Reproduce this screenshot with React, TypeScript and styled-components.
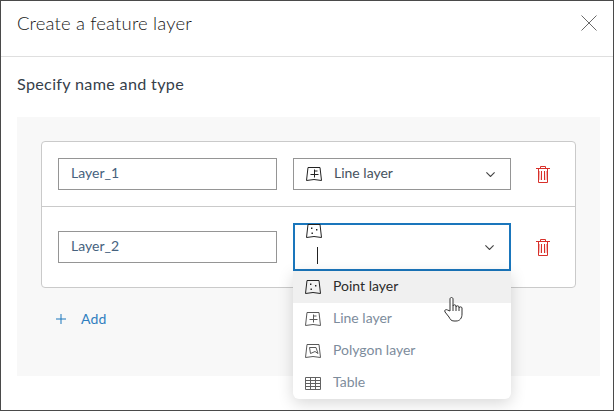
import React from 'react';
import styled, { createGlobalStyle } from 'styled-components';

const GlobalStyle = createGlobalStyle`
  html, body {
    margin: 0;
    padding: 0;
    background: #fff;
  }
  * {
    box-sizing: border-box;
  }
`;

const Dialog = styled.div`
  width: 614px;
  height: 411px;
  border: 1px solid #4a4a4a;
  background: #fff;
  font-family: Lato, "Open Sans", sans-serif;
  color: #4c4c4c;
  overflow: hidden;
  position: relative;
`;

const Header = styled.div`
  height: 56px;
  border-bottom: 1px solid #dfdfdf;
  padding: 10px 16px 0;
  display: flex;
  align-items: flex-start;
  justify-content: space-between;
`;

const Title = styled.div`
  font-size: 18.5px;
  line-height: 24px;
  font-weight: 300;
  color: #161616;
  letter-spacing: 0.15px;
`;

const CloseButton = styled.div`
  width: 16px;
  height: 16px;
  margin-top: 4px;
  display: flex;
`;

const Body = styled.div`
  padding: 17px 13px 0 16px;
`;

const SectionTitle = styled.div`
  font-size: 16.2px;
  line-height: 20px;
  color: #36404a;
  margin-bottom: 23px;
  letter-spacing: 0.3px;
`;

const Panel = styled.div`
  height: 259px;
  background: #f8f8f8;
  padding: 24px;
`;

const Card = styled.div`
  background: #fff;
  border: 1px solid #cacaca;
  border-radius: 4px;
`;

const Row = styled.div<{ $tall?: boolean }>`
  height: ${p => (p.$tall ? '80px' : '65px')};
  padding: 0 16px;
  display: flex;
  align-items: center;
  border-bottom: ${p => (p.$tall ? 'none' : '1px solid #cacaca')};
`;

const NameInput = styled.div`
  width: 219px;
  height: 32px;
  border: 1px solid #959595;
  padding: 0 12px;
  font-size: 14px;
  line-height: 28px;
  color: #46627e;
  flex: none;
`;

const SelectBox = styled.div<{ $open?: boolean }>`
  position: relative;
  width: 218px;
  height: ${p => (p.$open ? '48px' : '32px')};
  margin-left: 16px;
  flex: none;
  border: ${p => (p.$open ? '2px solid #1a76bc' : '1px solid #959595')};
  display: flex;
  align-items: ${p => (p.$open ? 'flex-start' : 'center')};
  padding-left: ${p => (p.$open ? '11px' : '12px')};
  font-size: 14px;
  color: #46525e;
`;

const SelectIcon = styled.span<{ $open?: boolean }>`
  display: flex;
  margin-top: ${p => (p.$open ? '-2px' : '0')};
`;

const SelectLabel = styled.span`
  margin-left: 12px;
  margin-bottom: 4px;
`;

const Chevron = styled.span`
  position: absolute;
  right: 15px;
  top: 50%;
  margin-top: -2px;
  display: flex;
`;

const Caret = styled.span`
  position: absolute;
  left: 22px;
  top: 22px;
  width: 1px;
  height: 17px;
  background: #222;
`;

const Trash = styled.div`
  margin-left: 25px;
  display: flex;
`;

const Menu = styled.div`
  position: absolute;
  top: 46px;
  left: -2px;
  width: 218px;
  background: #fff;
  border-radius: 0 0 6px 6px;
  box-shadow: 0 4px 16px rgba(0, 0, 0, 0.16);
  z-index: 5;
`;

const MenuItem = styled.div<{ $active?: boolean }>`
  height: 32px;
  display: flex;
  align-items: center;
  padding-left: 12px;
  font-size: 14px;
  background: ${p => (p.$active ? '#f0f0f0' : 'transparent')};
  color: ${p => (p.$active ? '#2b2b2b' : '#7d8c9c')};
`;

const MenuIcon = styled.span<{ $active?: boolean }>`
  display: flex;
  opacity: ${p => (p.$active ? 1 : 0.75)};
`;

const HandCursor = styled.div`
  position: absolute;
  left: 443px;
  top: 295px;
  z-index: 6;
  display: flex;
`;

const AddRow = styled.div`
  display: flex;
  align-items: center;
  margin-top: 21px;
  padding-left: 15px;
  color: #2f7fc0;
  font-size: 14px;
  line-height: 20px;
`;

const AddLabel = styled.span`
  margin-left: 15px;
  letter-spacing: 0.2px;
`;

const MapOutline = 'M2 1.500 L14 1.500 L15.500 14.500 L8 13.500 L.5 14.500 Z';

const PointIcon = () => (
  <svg width="16" height="16" viewBox="0 0 16 16" fill="none" stroke="#222" strokeWidth="1">
    <path d={MapOutline} />
    <path d="M5 4.500h1.400v1.400H5zM10 6h1.400v1.400H10zM5.500 9.500h1.400v1.400H5.500z" fill="#222" stroke="none" />
  </svg>
);

const LineIcon = () => (
  <svg width="16" height="16" viewBox="0 0 16 16" fill="none" stroke="#222" strokeWidth="1">
    <path d={MapOutline} />
    <path d="M8.500 3.500v8M4.500 8.500h8M8.500 5h3" />
  </svg>
);

const PolygonIcon = () => (
  <svg width="16" height="16" viewBox="0 0 16 16" fill="none" stroke="#222" strokeWidth="1">
    <path d={MapOutline} />
    <path d="M4.500 4.500h6.500l2 6-3-2-4.500 2z" />
  </svg>
);

const TableIcon = () => (
  <svg width="16" height="16" viewBox="0 0 16 16" fill="none" stroke="#2e2e2e" strokeWidth="1">
    <path d="M.5 2.500h15v12H.5zM.5 5.500h15M.5 8.500h15M.5 11.500h15M5.500 2.500v12M10.500 2.500v12" />
  </svg>
);

const TrashIcon = () => (
  <svg width="14" height="17" viewBox="0 0 14 17" fill="none" stroke="#d8302a" strokeWidth="1">
    <path d="M0 2.500h14M4.500 2.500V.5h5v2M2.500 3v13.500h9V3M5.500 5v9M8.500 5v9" />
    <path d="M3.500 5l.5 9M10.500 5l-.5 9" stroke="#eea19e" />
  </svg>
);

const ChevronIcon = () => (
  <svg width="9" height="5" viewBox="0 0 9 5" fill="none" stroke="#444" strokeWidth="1.100">
    <path d="M.4.4l4.100 4.100L8.600.4" />
  </svg>
);

const App: React.FC = () => {
  return (
    <>
      <GlobalStyle />
      <Dialog>
        <Header>
          <Title>Create a feature layer</Title>
          <CloseButton>
            <svg width="16" height="16" viewBox="0 0 16 16" fill="none" stroke="#6a6a6a" strokeWidth="1">
              <path d="M.5.5l15 15M15.500.5l-15 15" />
            </svg>
          </CloseButton>
        </Header>
        <Body>
          <SectionTitle>Specify name and type</SectionTitle>
          <Panel>
            <Card>
              <Row>
                <NameInput>Layer_1</NameInput>
                <SelectBox>
                  <SelectIcon><LineIcon /></SelectIcon>
                  <SelectLabel>Line layer</SelectLabel>
                  <Chevron><ChevronIcon /></Chevron>
                </SelectBox>
                <Trash><TrashIcon /></Trash>
              </Row>
              <Row $tall>
                <NameInput>Layer_2</NameInput>
                <SelectBox $open>
                  <SelectIcon $open><PointIcon /></SelectIcon>
                  <Caret />
                  <Chevron><ChevronIcon /></Chevron>
                  <Menu>
                    <MenuItem $active>
                      <MenuIcon $active><PointIcon /></MenuIcon>
                      <SelectLabel>Point layer</SelectLabel>
                    </MenuItem>
                    <MenuItem>
                      <MenuIcon><LineIcon /></MenuIcon>
                      <SelectLabel>Line layer</SelectLabel>
                    </MenuItem>
                    <MenuItem>
                      <MenuIcon><PolygonIcon /></MenuIcon>
                      <SelectLabel>Polygon layer</SelectLabel>
                    </MenuItem>
                    <MenuItem>
                      <MenuIcon><TableIcon /></MenuIcon>
                      <SelectLabel>Table</SelectLabel>
                    </MenuItem>
                  </Menu>
                </SelectBox>
                <Trash><TrashIcon /></Trash>
              </Row>
            </Card>
            <AddRow>
              <svg width="10" height="10" viewBox="0 0 10 10" fill="none" stroke="#1a76bc" strokeWidth="1">
                <path d="M5 0v10M0 5h10" />
              </svg>
              <AddLabel>Add</AddLabel>
            </AddRow>
          </Panel>
        </Body>
        <HandCursor>
          <svg width="20" height="27" viewBox="0 0 20 27" fill="#fff" stroke="#333" strokeWidth="1" strokeLinejoin="round">
            <path d="M6 15V3c0-2 3-2 3 0v7c0-1.600 3-1.600 3 0v1c0-1.600 3-1.600 3 0v1c0-1.500 3-1.500 3 0v6c0 4-2 7-6 7H10c-3 0-4-2-5-4l-4-5c-1-2 1-3 2.500-2z" />
            <path d="M9 10v5M12 11v4M15 12v3" fill="none" />
          </svg>
        </HandCursor>
      </Dialog>
    </>
  );
};

export default App;
